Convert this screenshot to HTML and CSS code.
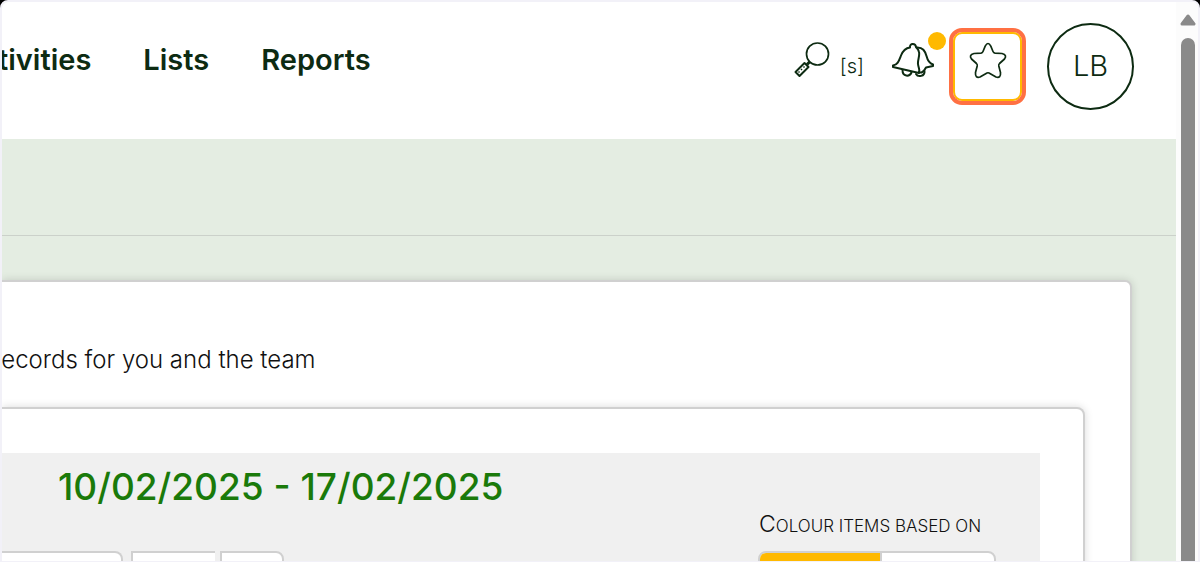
FILE: index.html
```html
<!DOCTYPE html>
<html lang="en">
<head>
<meta charset="utf-8">
<title>Activities</title>
<link rel="stylesheet" href="styles.css">
</head>
<body>
<div class="frame">
  <div class="page">
    <header class="header">
      <nav class="nav">
        <a href="#">tivities</a>
        <a href="#">Lists</a>
        <a href="#">Reports</a>
      </nav>
      <div class="tools">
        <button class="search" type="button" aria-label="Search">
          <svg width="36" height="36" viewBox="0 0 36 36" fill="none" stroke="#0d2b12" stroke-width="1.7" stroke-linejoin="round">
            <circle cx="23.500" cy="12" r="11"/>
            <path d="M16 19.500l-3 3" stroke-width="3"/>
            <path d="M1.500 30L10.500 21l4 4L5.500 34z" stroke-width="2"/>
            <path d="M4.500 29.500l1 1M7 27l1 1M9.500 24.500l1 1" stroke-width="1.500"/>
          </svg>
          <span>[s]</span>
        </button>
        <button class="bell" type="button" aria-label="Notifications">
          <svg width="42" height="36" viewBox="0 0 42 36" fill="none" stroke="#0d2b12" stroke-width="2" stroke-linejoin="round" stroke-linecap="round">
            <path d="M18 4.500C17.500 0 23.500 0 24 4c1 1 2.500 2 3 5 1 4-1.500 8-1 12 .5 4 2 5 1 9L1 24v-1.500c5-1 6-5 8-10C11 7.500 14 5 18 4.500z"/>
            <path d="M24.500 4.500C31 4 33 8 34.500 13c1 4 2 7 6.500 8.500V23l-7 1.500c-1 2-2 4-4.500 5H27"/>
            <path d="M10.500 27c0 7 7 7 9 2.500M24 31c2 3.500 9 2.500 8.500-3"/>
          </svg>
          <span class="dot"></span>
        </button>
        <button class="star" type="button" aria-label="Favourites">
          <svg width="38" height="38" viewBox="0 0 38 38" fill="none" stroke="#0d2b12" stroke-width="1.700" stroke-linejoin="round">
            <path d="M16.200 4.200Q19 -1.200 21.800 4.200L24 9.500Q24.600 11 26 11.200L33 11.500Q38.500 13 35.500 17L30.500 21.500Q29.500 22.500 29.800 24L31.500 30.500Q32 36.500 27 35L20 31Q19 30.500 18 31L11 35Q6 36.500 6.500 30.500L8.200 24Q8.500 22.500 7.500 21.500L2.500 17Q-.500 13 5 11.500L12 11.200Q13.400 11 14 9.500z"/>
          </svg>
        </button>
        <button class="avatar" type="button">LB</button>
      </div>
    </header>
    <div class="band"></div>
    <main class="main">
      <section class="card">
        <p class="intro">records for you and the team</p>
        <div class="inner">
          <div class="panel">
            <h2 class="dates">10/02/2025 - 17/02/2025</h2>
            <div class="controls">
              <div class="buttons">
                <button class="btn b1" type="button" aria-label="View"></button>
                <button class="btn b2" type="button" aria-label="Previous"></button>
                <button class="btn b3" type="button" aria-label="Next"></button>
              </div>
              <div class="colour">
                <div class="label" id="colour-label">Colour items based on</div>
                <div class="toggle" role="group" aria-labelledby="colour-label">
                  <button class="on" type="button" aria-label="First option"></button>
                  <button type="button" aria-label="Second option"></button>
                </div>
              </div>
            </div>
          </div>
        </div>
      </section>
    </main>
  </div>
  <div class="scroll">
    <svg width="16" height="13" viewBox="0 0 16 13"><path d="M8 3L14 11H2z" fill="#8a8a8a" stroke="#8a8a8a" stroke-width="3" stroke-linejoin="round"/></svg>
    <div class="thumb"></div>
  </div>
</div>
</body>
</html>
```
FILE: styles.css
```css
* { box-sizing: border-box; }
html { background: #000; }
body { margin: 0; font-family: Inter, "Liberation Sans", sans-serif; color: #111; }
button { font: inherit; color: inherit; background: none; border: 0; padding: 0; }

.frame {
  display: flex;
  height: 100vh;
  overflow: hidden;
  border: 2px solid #f2f1f8;
  border-bottom-width: 1px;
  border-radius: 8px 8px 0 0;
  background: #fff;
}
.page { flex: 1; min-width: 0; overflow: hidden; background: #e4ede2; }

.header {
  display: flex;
  justify-content: space-between;
  align-items: flex-start;
  height: 137px;
  padding: 21px 42px 0 0;
  background: #fff;
}
.nav { display: flex; gap: 52px; padding-top: 19px; margin-left: -4px; }
.nav a {
  color: #0d2b12;
  font-size: 29px;
  line-height: 36px;
  font-weight: 600;
  text-decoration: none;
}
.tools { display: flex; align-items: flex-start; color: #0d2b12; }
.search { display: flex; gap: 10px; padding-top: 19px; margin-right: 28px; }
.search span { font-size: 20px; line-height: 28px; font-weight: 300; padding-top: 10px; }
.bell { position: relative; padding-top: 20px; margin-right: 15px; }
.bell svg, .star svg { display: block; }
.dot {
  position: absolute;
  top: 9px;
  right: -12px;
  width: 18px;
  height: 18px;
  border-radius: 50%;
  background: #ffb900;
}
.star {
  display: flex;
  justify-content: center;
  width: 77px;
  height: 77px;
  margin: 5px 21px 0 0;
  padding-top: 10px;
  border: 4px solid #ff7043;
  border-radius: 13px;
  box-shadow: inset 0 0 0 2px #ffb900;
}
.avatar {
  width: 87px;
  height: 87px;
  border: 2px solid #0d2b12;
  border-radius: 50%;
  font-size: 29px;
  line-height: 32px;
  font-weight: 300;
  padding-bottom: 2px;
}

.band { height: 97px; border-bottom: 1px solid #cbd1ca; }
.main { padding: 44px 44px 0 0; }
.card, .inner {
  border: 2px solid #d0d0d0;
  border-left: 0;
  background: #fff;
}
.card {
  height: 400px;
  padding: 62px 45px 0 0;
  border-radius: 0 7px 0 0;
  box-shadow: 0 0 8px rgba(0, 0, 0, .15);
}
.intro {
  margin: 0 0 31px -9px;
  font-size: 24px;
  line-height: 32px;
  font-weight: 300;
}
.inner {
  padding: 44px 43px 0 0;
  border-radius: 0 8px 0 0;
  box-shadow: 0 0 8px rgba(0, 0, 0, .15);
}
.panel { height: 240px; padding-top: 12px; background: #f0f0f0; }
.dates {
  margin: 0 0 0 56px;
  color: #1a7a0a;
  font-size: 37px;
  line-height: 44px;
  font-weight: 500;
}
.controls {
  display: flex;
  justify-content: space-between;
  align-items: flex-end;
  padding-right: 44px;
}
.buttons { display: flex; }
.btn { height: 40px; border: 2px solid #d0d0d0; background: #fff; }
.b1 { width: 121px; border-left: 0; border-radius: 0 8px 8px 0; margin-right: 8px; }
.b2 { width: 84px; border-right: 0; margin-right: 5px; }
.b3 { width: 64px; border-radius: 0 8px 8px 0; }
.colour { width: 238px; }
.label {
  padding-left: 1px;
  margin-bottom: 10px;
  font-size: 17px;
  line-height: 30px;
  font-weight: 300;
  text-transform: uppercase;
  white-space: nowrap;
}
.label::first-letter { font-size: 23px; }
.toggle {
  display: flex;
  height: 40px;
  overflow: hidden;
  border: 2px solid #d0d0d0;
  border-radius: 8px;
  background: #fff;
}
.toggle button { flex: 1; }
.toggle .on { flex: 0 0 122px; background: #ffb900; border-right: 2px solid #d0d0d0; }

.scroll {
  display: flex;
  flex-direction: column;
  align-items: center;
  gap: 12px;
  width: 22px;
  padding: 11px 0 0 2px;
  background: #fcfcfc;
}
.scroll svg { flex: none; }
.thumb { flex: 1; width: 14px; border-radius: 7px 7px 0 0; background: #8a8a8a; }
```
